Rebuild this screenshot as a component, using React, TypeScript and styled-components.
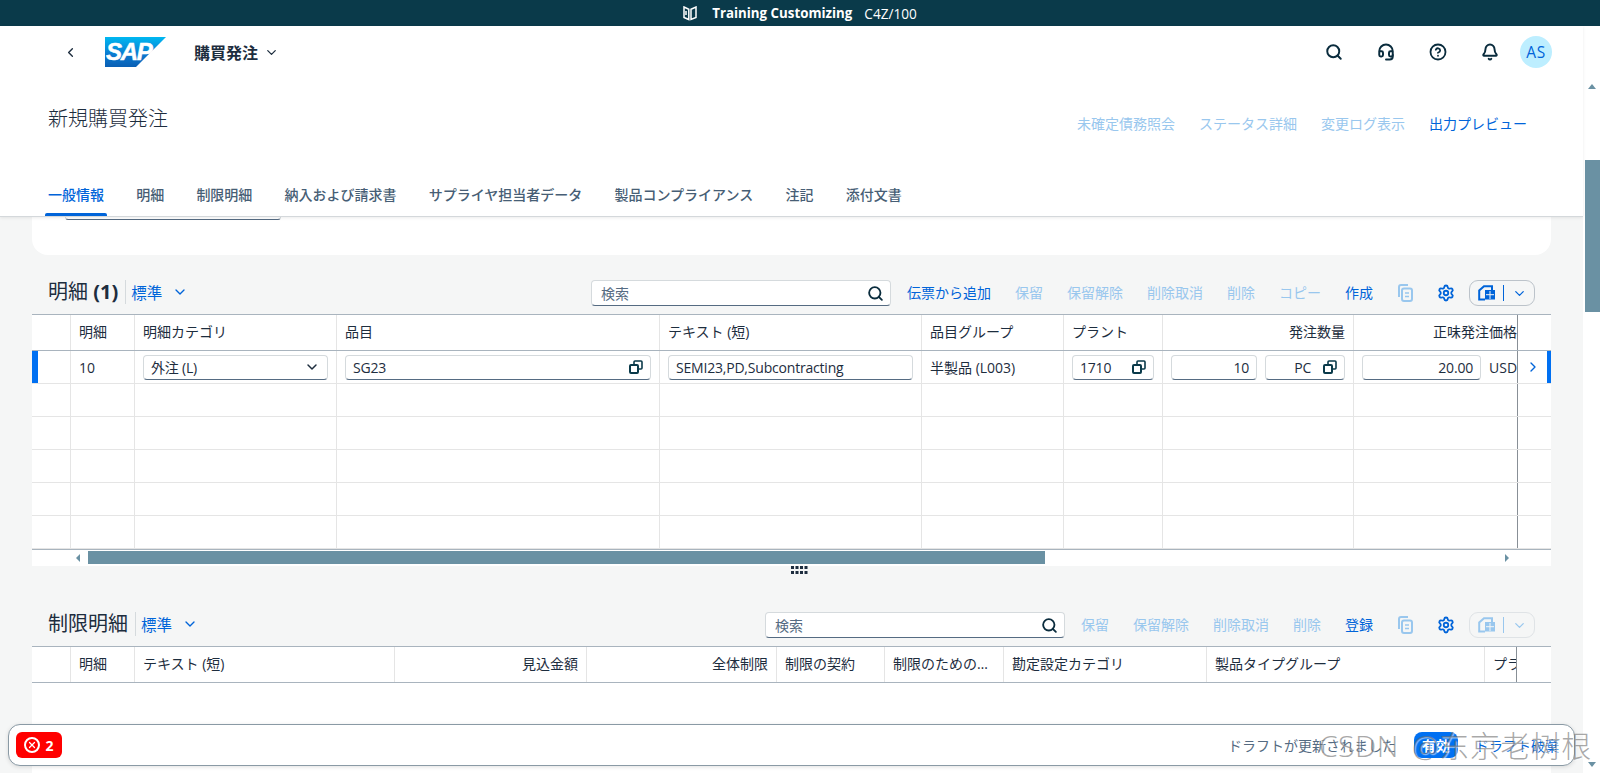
import React from "react";
import styled, { createGlobalStyle } from "styled-components";
import { Search, Headset, CircleHelp, Bell, ChevronLeft, ChevronDown, ChevronRight, Settings, X } from "lucide-react";

const Global = createGlobalStyle`
  html, body { margin: 0; padding: 0; height: 100%; overflow: hidden; }
  body { font-family: "Open Sans", "Noto Sans CJK JP", sans-serif; font-size: 14px; color: #1d2d3e; }
  * { box-sizing: border-box; }
`;

const BLUE = "#0064d9";
const FADED = "#99c7ee";

const Page = styled.div`
  position: relative;
  width: 1600px;
  height: 773px;
  overflow: hidden;
  display: flex;
  flex-direction: column;
  background: #f5f6f6;
`;
const SystemBar = styled.div`
  height: 26px;
  flex: none;
  background: #0a3a4a;
  color: #fff;
  display: flex;
  align-items: center;
  justify-content: center;
  font-size: 13.6px;
`;
const SystemName = styled.span`
  font-weight: 700;
  font-size: 13.3px;
  margin: 0 12px 0 15px;
`;
const Frame = styled.div`
  flex: 1;
  min-height: 0;
  display: flex;
`;
const Main = styled.div`
  flex: 1;
  min-width: 0;
  display: flex;
  flex-direction: column;
`;
const Rail = styled.div`
  width: 17px;
  flex: none;
  background: #fff;
  display: flex;
  flex-direction: column;
  align-items: flex-end;
  padding-top: 58px;
`;
const RailThumb = styled.div`
  width: 15px;
  height: 152px;
  margin-top: 71px;
  background: #6a91a3;
`;
const RailArrow = styled.div<{ $down?: boolean }>`
  width: 0;
  height: 0;
  margin-right: 4px;
  border-left: 4px solid transparent;
  border-right: 4px solid transparent;
  ${(p) => (p.$down ? "border-top: 5px solid #6a91a3; margin-top: auto; margin-bottom: 6px;" : "border-bottom: 5px solid #6a91a3;")}
`;
const Header = styled.header`
  flex: none;
  height: 191px;
  background: #fff;
  border-bottom: 1px solid #d4d8db;
  box-shadow: 0 1px 3px rgba(0, 0, 0, 0.08);
  position: relative;
  z-index: 2;
  display: flex;
  flex-direction: column;
`;
const ShellRow = styled.div`
  height: 52px;
  display: flex;
  align-items: center;
  padding: 0 31px 0 63px;
`;
const AppTitle = styled.button`
  border: 0;
  background: none;
  padding: 0;
  margin-left: 28px;
  display: flex;
  align-items: center;
  gap: 6px;
  font: 700 16px "Open Sans", "Noto Sans CJK JP", sans-serif;
  color: #1d2d3e;
`;
const ShellIcons = styled.div`
  margin-left: auto;
  display: flex;
  align-items: center;
  gap: 34px;
  color: #0a2c3d;
`;
const Avatar = styled.div`
  width: 32px;
  height: 32px;
  margin-left: -13px;
  border-radius: 50%;
  background: #bdeeff;
  color: ${BLUE};
  display: flex;
  align-items: center;
  justify-content: center;
  font-size: 15.5px;
  letter-spacing: 0.5px;
`;
const TitleRow = styled.div`
  height: 88px;
  display: flex;
  align-items: flex-start;
  padding: 26px 56px 0 48px;
`;
const PageTitle = styled.h1`
  margin: 0;
  font-size: 20px;
  font-weight: 300;
  line-height: 30px;
`;
const PageActions = styled.div`
  margin-left: auto;
  display: flex;
  gap: 24px;
  padding-top: 10px;
`;
const LinkAction = styled.span<{ $off?: boolean }>`
  font-size: 14px;
  line-height: 20px;
  white-space: nowrap;
  color: ${(p) => (p.$off ? FADED : BLUE)};
`;
const Tabs = styled.nav`
  display: flex;
  gap: 32.2px;
  padding-left: 48px;
  height: 50px;
`;
const Tab = styled.div<{ $on?: boolean }>`
  position: relative;
  font-size: 14px;
  font-weight: 500;
  line-height: 20px;
  padding-top: 19px;
  color: ${(p) => (p.$on ? BLUE : "#475e75")};
  &::after {
    content: "";
    display: ${(p) => (p.$on ? "block" : "none")};
    position: absolute;
    left: -3px;
    right: -3px;
    bottom: 0;
    height: 3px;
    background: ${BLUE};
    border-radius: 2px 2px 0 0;
  }
`;
const Body = styled.main`
  flex: 1;
  min-height: 0;
  overflow: hidden;
  padding: 0 32px;
  display: flex;
  flex-direction: column;
`;
const FormCard = styled.div`
  flex: none;
  height: 38px;
  background: #fff;
  border-radius: 0 0 16px 16px;
  padding-left: 33px;
`;
const FieldStub = styled.div`
  width: 216px;
  height: 3px;
  border: 1px solid #d5dadd;
  border-top: 0;
  border-bottom: 1px solid #556b82;
  border-radius: 0 0 3px 3px;
`;
const Toolbar = styled.div<{ $top: number }>`
  flex: none;
  height: 26px;
  margin: ${(p) => p.$top}px 16px 8px 16px;
  display: flex;
  align-items: center;
`;
const TableTitle = styled.h2`
  margin: 0 0 2px;
  font-size: 20px;
  font-weight: 400;
  line-height: 26px;
  white-space: nowrap;
  & b {
    font-weight: 700;
  }
`;
const Variant = styled.div`
  display: flex;
  align-items: center;
  height: 24px;
  margin: 0 0 2px 7px;
  padding-left: 5px;
  border-left: 1px solid #d5dadd;
  color: ${BLUE};
  font-size: 15.5px;
  gap: 10px;
`;
const SearchBox = styled.div<{ $w: number }>`
  width: ${(p) => p.$w}px;
  height: 26px;
  margin-left: auto;
  background: #fff;
  border: 1px solid #d5dadd;
  border-bottom-color: #556b82;
  border-radius: 4px;
  display: flex;
  align-items: center;
  justify-content: space-between;
  padding: 0 6px 0 9px;
  font-size: 14px;
  color: #556b82;
`;
const ToolActions = styled.div`
  display: flex;
  align-items: center;
  gap: 24px;
  margin-left: 16px;
`;
const ExportButton = styled.div<{ $off?: boolean }>`
  width: 66px;
  height: 26px;
  margin-left: -10px;
  padding-left: 8px;
  border: 1px solid ${(p) => (p.$off ? "#dfe3e6" : "#bcc3ca")};
  border-radius: 9px;
  display: flex;
  align-items: center;
  gap: 8px;
  color: ${(p) => (p.$off ? FADED : BLUE)};
`;
const Sep = styled.span`
  width: 1px;
  height: 16px;
  background: currentColor;
`;
const Grid = styled.div<{ $fill?: boolean }>`
  flex: ${(p) => (p.$fill ? "1" : "none")};
  background: #fff;
  border-top: 1px solid #a9b4be;
`;
const Row = styled.div<{ $cols: string; $h: number; $head?: boolean }>`
  display: grid;
  grid-template-columns: ${(p) => p.$cols};
  height: ${(p) => p.$h}px;
  border-bottom: 1px solid ${(p) => (p.$head ? "#a9b4be" : "#e5e5e5")};
  ${(p) => (p.$head ? "& > div { padding-bottom: 3px; }" : "")}
`;
const Cell = styled.div<{ $end?: boolean; $fixed?: boolean; $mark?: "left" | "right" }>`
  display: flex;
  align-items: center;
  gap: 8px;
  min-width: 0;
  overflow: hidden;
  white-space: nowrap;
  padding: 0 ${(p) => (p.$fixed ? 0 : 8)}px;
  justify-content: ${(p) => (p.$end ? "flex-end" : "flex-start")};
  border-right: 1px solid ${(p) => (p.$fixed ? "transparent" : "#e5e5e5")};
  ${(p) => (p.$mark === "left" ? `border-left: 6px solid #0070f2;` : "")}
  ${(p) => (p.$mark === "right" ? `border-right: 4px solid #0070f2; justify-content: center; color: ${BLUE};` : "")}
`;
const FixedEdge = styled.div`
  position: relative;
  &::before {
    content: "";
    position: absolute;
    top: 0;
    bottom: 0;
    left: -1px;
    width: 1px;
    background: #888f96;
  }
`;
const Input = styled.div<{ $w?: number; $end?: boolean }>`
  ${(p) => (p.$w ? `width: ${p.$w}px; flex: none;` : "flex: 1;")}
  height: 25px;
  min-width: 0;
  background: #fff;
  border: 1px solid #d5dadd;
  border-bottom-color: #556b82;
  border-radius: 4px;
  display: flex;
  align-items: center;
  justify-content: ${(p) => (p.$end ? "flex-end" : "space-between")};
  padding: 0 7px;
  gap: 12px;
  font-size: 14px;
  letter-spacing: -0.2px;
`;
const HScroll = styled.div`
  flex: none;
  height: 17px;
  background: #fff;
  border-top: 1px solid #a9b4be;
  display: flex;
  align-items: center;
  position: relative;
  padding: 0 0 1px 56px;
`;
const HThumb = styled.div`
  width: 957px;
  height: 13px;
  background: #6a91a3;
`;
const HArrow = styled.div<{ $right?: boolean }>`
  width: 0;
  height: 0;
  border-top: 4px solid transparent;
  border-bottom: 4px solid transparent;
  ${(p) =>
    p.$right
      ? "border-left: 4px solid #6a91a3; margin-left: 460px;"
      : "border-right: 4px solid #6a91a3; margin-left: -12px; margin-right: 8px; position: relative;"}
`;
const Grip = styled.div`
  flex: none;
  height: 9px;
  display: flex;
  justify-content: center;
  padding-left: 16px;
  color: #1d2d3e;
  & svg { display: block; }
`;
const Footer = styled.footer`
  position: absolute;
  left: 8px;
  top: 724px;
  width: 1567px;
  height: 42px;
  background: #fff;
  border: 1px solid #8a9aa5;
  border-radius: 12px;
  box-shadow: 0 1px 4px rgba(0, 0, 0, 0.12);
  display: flex;
  align-items: center;
  padding: 0 15px 0 7px;
  z-index: 3;
`;
const ErrorBadge = styled.div`
  width: 46px;
  height: 26px;
  background: #f00;
  border-radius: 6px;
  color: #fff;
  font-weight: 700;
  font-size: 14px;
  display: flex;
  align-items: center;
  justify-content: center;
  gap: 5px;
`;
const ErrorRing = styled.span`
  width: 16px;
  height: 16px;
  border: 2px solid #fff;
  border-radius: 50%;
  display: flex;
  align-items: center;
  justify-content: center;
`;
const DraftNote = styled.span`
  margin-left: auto;
  color: #556b82;
  font-size: 14px;
`;
const PrimaryButton = styled.div`
  margin-left: 18px;
  width: 44px;
  height: 26px;
  background: #0070f2;
  color: #fff;
  border-radius: 8px;
  display: flex;
  align-items: center;
  justify-content: center;
  font-size: 14px;
  font-weight: 700;
`;
const GhostButton = styled.div`
  margin-left: 17px;
  color: ${BLUE};
  font-size: 14px;
`;
const Watermark = styled.div`
  position: absolute;
  left: 1319px;
  top: 726px;
  font-family: "Open Sans", "Noto Sans CJK SC", sans-serif;
  font-weight: 300;
  font-size: 30px;
  line-height: 40px;
  letter-spacing: 0.5px;
  word-spacing: 5px;
  white-space: nowrap;
  color: rgba(110, 110, 110, 0.6);
  text-shadow: 1px 1px 1px rgba(255, 255, 255, 0.6);
  z-index: 4;
`;

const ValueHelp = () => (
  <svg width="14" height="14" viewBox="0 0 14 14" fill="none" stroke="#0a3a4a" style={{ flex: "none" }}>
    <rect x="1" y="5" width="8" height="8" rx="1" strokeWidth="2" />
    <path d="M5 4V2a1 1 0 0 1 1-1h6a1 1 0 0 1 1 1v6a1 1 0 0 1-1 1h-2" strokeWidth="1.6" />
  </svg>
);
const CopyDoc = () => (
  <svg width="16" height="18" viewBox="0 0 16 18" fill="none" stroke={FADED} strokeWidth="2">
    <path d="M2 13V3a2 2 0 0 1 2-2h7" />
    <rect x="5" y="4.5" width="10" height="12.5" rx="2" />
    <path d="M8 9h4M8 12.5h4" strokeWidth="1.5" />
  </svg>
);
const SheetIcon = () => (
  <svg width="17" height="16" viewBox="0 0 17 16" fill="none" stroke="currentColor">
    <path d="M7 14.5H1.2V5.5L6 1.2h8v4" strokeWidth="2" />
    <rect x="7" y="5" width="10" height="9.5" fill="currentColor" stroke="none" />
    <path d="M8 9.7h8M12 6v8" stroke="#f5f6f6" strokeWidth="1" />
  </svg>
);
const BookIcon = () => (
  <svg width="14" height="15" viewBox="0 0 14 15" fill="none" stroke="#fff" strokeWidth="1.5">
    <path d="M1 1l4.8 2.2v10.3L1 11.5z" />
    <path d="M8 3.2 13 1v10.5L8 13.5z" />
    <path d="M3 5v4" />
  </svg>
);
const SapLogo = () => (
  <svg width="61" height="30" viewBox="0 0 61 30" style={{ marginLeft: 27, flex: "none" }}>
    <defs>
      <linearGradient id="sapg" x1="0" y1="0" x2="0" y2="1">
        <stop offset="0" stopColor="#00b8f1" />
        <stop offset="0.6" stopColor="#0a78cf" />
        <stop offset="1" stopColor="#0a5fb4" />
      </linearGradient>
    </defs>
    <polygon points="0,0 61,0 31,30 0,30" fill="url(#sapg)" />
    <text x="1" y="23" fontFamily="Liberation Sans, sans-serif" fontWeight="700" fontStyle="italic" fontSize="24" letterSpacing="-1.3" fill="#fff" stroke="#fff" strokeWidth="0.5">SAP</text>
  </svg>
);
const GripDots = () => (
  <svg width="17" height="8" viewBox="0 0 17 8" fill="currentColor">
    {[0, 4.5, 9, 13.5].map((x) =>
      [0, 5].map((y) => <rect key={`${x}-${y}`} x={x} y={y} width="3" height="3" />)
    )}
  </svg>
);

const colsA = "39px 64px 202px 323px 262px 142px 99px 191px 164px 33px";
const colsB = "39px 64px 260px 192px 190px 108px 119px 203px 278px 32px 34px";
const emptyRows = [0, 1, 2, 3, 4];
const tabs = ["一般情報", "明細", "制限明細", "納入および請求書", "サプライヤ担当者データ", "製品コンプライアンス", "注記", "添付文書"];

export default function App() {
  return (
    <Page>
      <Global />
      <SystemBar>
        <BookIcon />
        <SystemName>Training Customizing</SystemName>
        <span>C4Z/100</span>
      </SystemBar>
      <Frame>
        <Main>
          <Header>
            <ShellRow>
              <ChevronLeft size={15} strokeWidth={2.2} />
              <SapLogo />
              <AppTitle>
                購買発注 <ChevronDown size={15} strokeWidth={2} />
              </AppTitle>
              <ShellIcons>
                <Search size={18} strokeWidth={2.6} />
                <Headset size={18} strokeWidth={2.6} />
                <CircleHelp size={18} strokeWidth={2.4} />
                <Bell size={18} strokeWidth={2.6} />
                <Avatar>AS</Avatar>
              </ShellIcons>
            </ShellRow>
            <TitleRow>
              <PageTitle>新規購買発注</PageTitle>
              <PageActions>
                <LinkAction $off>未確定債務照会</LinkAction>
                <LinkAction $off>ステータス詳細</LinkAction>
                <LinkAction $off>変更ログ表示</LinkAction>
                <LinkAction>出力プレビュー</LinkAction>
              </PageActions>
            </TitleRow>
            <Tabs>
              {tabs.map((t, i) => (
                <Tab key={t} $on={i === 0}>{t}</Tab>
              ))}
            </Tabs>
          </Header>
          <Body>
            <FormCard>
              <FieldStub />
            </FormCard>
            <Toolbar $top={25}>
              <TableTitle>明細 <b>(1)</b></TableTitle>
              <Variant>標準 <ChevronDown size={16} /></Variant>
              <SearchBox $w={300}>検索 <Search size={17} strokeWidth={2.6} color="#0a2c3d" /></SearchBox>
              <ToolActions>
                <LinkAction>伝票から追加</LinkAction>
                <LinkAction $off>保留</LinkAction>
                <LinkAction $off>保留解除</LinkAction>
                <LinkAction $off>削除取消</LinkAction>
                <LinkAction $off>削除</LinkAction>
                <LinkAction $off>コピー</LinkAction>
                <LinkAction>作成</LinkAction>
                <CopyDoc />
                <Settings size={18} color={BLUE} strokeWidth={2.4} />
                <ExportButton>
                  <SheetIcon /><Sep /><ChevronDown size={15} strokeWidth={2} />
                </ExportButton>
              </ToolActions>
            </Toolbar>
            <Grid>
              <Row $cols={colsA} $h={36} $head>
                <Cell />
                <Cell>明細</Cell>
                <Cell>明細カテゴリ</Cell>
                <Cell>品目</Cell>
                <Cell>テキスト (短)</Cell>
                <Cell>品目グループ</Cell>
                <Cell>プラント</Cell>
                <Cell $end>発注数量</Cell>
                <Cell $end style={{ paddingRight: 0, borderRightColor: "transparent" }}>正味発注価格</Cell>
                <FixedEdge />
              </Row>
              <Row $cols={colsA} $h={33}>
                <Cell $mark="left" />
                <Cell>10</Cell>
                <Cell><Input>外注 (L) <ChevronDown size={16} strokeWidth={2.2} /></Input></Cell>
                <Cell><Input>SG23 <ValueHelp /></Input></Cell>
                <Cell><Input>SEMI23,PD,Subcontracting</Input></Cell>
                <Cell>半製品 (L003)</Cell>
                <Cell><Input>1710 <ValueHelp /></Input></Cell>
                <Cell><Input $w={86} $end>10</Input><Input $end>PC <ValueHelp /></Input></Cell>
                <Cell style={{ paddingRight: 0, borderRightColor: "transparent" }}><Input $w={119} $end>20.00</Input>USD</Cell>
                <FixedEdge><Cell $mark="right" $fixed style={{ height: "100%" }}><ChevronRight size={16} strokeWidth={2} /></Cell></FixedEdge>
              </Row>
              {emptyRows.map((r) => (
                <Row key={r} $cols={colsA} $h={33}>
                  <Cell /><Cell /><Cell /><Cell /><Cell /><Cell /><Cell /><Cell />
                  <Cell style={{ borderRightColor: "transparent" }} />
                  <FixedEdge />
                </Row>
              ))}
            </Grid>
            <HScroll>
              <HArrow />
              <HThumb />
              <HArrow $right />
            </HScroll>
            <Grip><GripDots /></Grip>
            <Toolbar $top={37}>
              <TableTitle>制限明細</TableTitle>
              <Variant>標準 <ChevronDown size={16} /></Variant>
              <SearchBox $w={300}>検索 <Search size={17} strokeWidth={2.6} color="#0a2c3d" /></SearchBox>
              <ToolActions>
                <LinkAction $off>保留</LinkAction>
                <LinkAction $off>保留解除</LinkAction>
                <LinkAction $off>削除取消</LinkAction>
                <LinkAction $off>削除</LinkAction>
                <LinkAction>登録</LinkAction>
                <CopyDoc />
                <Settings size={18} color={BLUE} strokeWidth={2.4} />
                <ExportButton $off>
                  <SheetIcon /><Sep /><ChevronDown size={15} strokeWidth={2} />
                </ExportButton>
              </ToolActions>
            </Toolbar>
            <Grid $fill>
              <Row $cols={colsB} $h={36} $head>
                <Cell />
                <Cell>明細</Cell>
                <Cell>テキスト (短)</Cell>
                <Cell $end>見込金額</Cell>
                <Cell $end>全体制限</Cell>
                <Cell>制限の契約</Cell>
                <Cell>制限のための…</Cell>
                <Cell>勘定設定カテゴリ</Cell>
                <Cell>製品タイプグループ</Cell>
                <Cell style={{ paddingRight: 0, borderRightColor: "transparent" }}>プラント</Cell>
                <FixedEdge />
              </Row>
            </Grid>
          </Body>
        </Main>
        <Rail>
          <RailArrow />
          <RailThumb />
          <RailArrow $down />
        </Rail>
      </Frame>
      <Footer>
        <ErrorBadge>
          <ErrorRing><X size={10} strokeWidth={3} /></ErrorRing>2
        </ErrorBadge>
        <DraftNote>ドラフトが更新されました</DraftNote>
        <PrimaryButton>有効</PrimaryButton>
        <GhostButton>ドラフト破棄</GhostButton>
      </Footer>
      <Watermark>CSDN @东京老树根</Watermark>
    </Page>
  );
}
